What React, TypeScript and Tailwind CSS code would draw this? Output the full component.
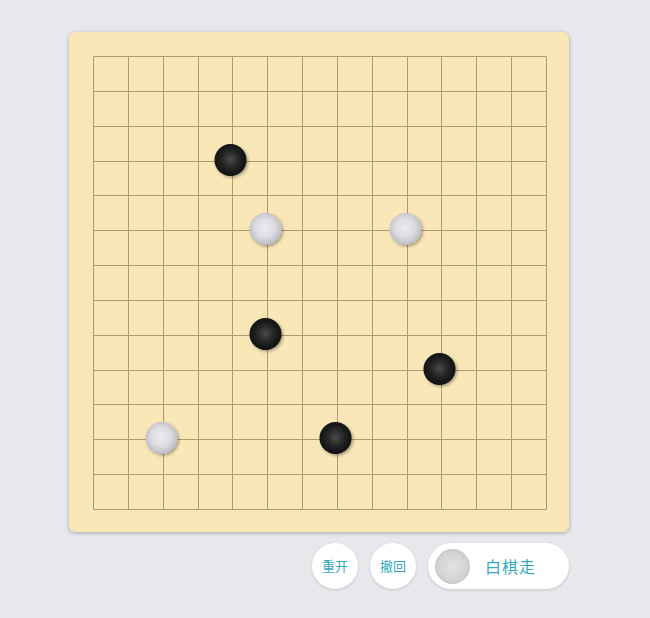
import React from "react";

type Stone = { col: number; row: number; black: boolean };

const stones: Stone[] = [
  { col: 4, row: 3, black: true },
  { col: 5, row: 5, black: false },
  { col: 9, row: 5, black: false },
  { col: 5, row: 8, black: true },
  { col: 10, row: 9, black: true },
  { col: 2, row: 11, black: false },
  { col: 7, row: 11, black: true },
];

const CELLS = 13;
const GRID = 453;
const STEP = GRID / CELLS;
const PAD = 24;

function Board() {
  const lines = Array.from({ length: CELLS + 1 }, (_, i) => PAD + 0.5 + Math.round(i * STEP));
  return (
    <div className="w-[500px] h-[500px] rounded-md bg-[#f9e7b8] shadow-[0_1px_4px_rgba(0,0,0,0.28)]">
      <svg width="500" height="500" viewBox="0 0 500 500">
        <defs>
          <radialGradient id="blk" cx="50%" cy="48%" r="55%">
            <stop offset="0%" stopColor="#4a4a4a" />
            <stop offset="50%" stopColor="#252525" />
            <stop offset="100%" stopColor="#0b0b0b" />
          </radialGradient>
          <radialGradient id="wht" cx="48%" cy="46%" r="55%">
            <stop offset="0%" stopColor="#ececef" />
            <stop offset="55%" stopColor="#dcdce1" />
            <stop offset="100%" stopColor="#b9b9c1" />
          </radialGradient>
          <filter id="sh" x="-30%" y="-30%" width="160%" height="160%">
            <feDropShadow dx="1.5" dy="1.5" stdDeviation="1.5" floodColor="#000" floodOpacity="0.35" />
          </filter>
        </defs>
        {lines.map((p, i) => (
          <g key={i} stroke="#b09a6a" strokeWidth="1">
            <line x1={p} y1={lines[0]} x2={p} y2={lines[CELLS]} />
            <line x1={lines[0]} y1={p} x2={lines[CELLS]} y2={p} />
          </g>
        ))}
        {stones.map((s, i) => (
          <circle
            key={i}
            cx={lines[s.col] - 2}
            cy={lines[s.row] - 1.5}
            r="16"
            fill={s.black ? "url(#blk)" : "url(#wht)"}
            filter="url(#sh)"
          />
        ))}
      </svg>
    </div>
  );
}

export default function App() {
  return (
    <div
      className="w-[650px] h-[618px] bg-[#e7e8ec] pt-[32px] pl-[69px]"
      style={{ fontFamily: '"Noto Sans CJK SC", "Noto Sans", sans-serif' }}
    >
      <div className="w-[500px] flex flex-col">
        <Board />
        {/* 操作按钮 */}
        <div className="flex justify-end items-center gap-3 mt-[11px]">
          <button className="w-[46px] h-[46px] rounded-full bg-white text-[13px] text-[#35a9c1] shadow-[0_1px_3px_rgba(0,0,0,0.15)]">
            重开
          </button>
          <button className="w-[46px] h-[46px] rounded-full bg-white text-[13px] text-[#35a9c1] shadow-[0_1px_3px_rgba(0,0,0,0.15)]">
            撤回
          </button>
          <div className="w-[141px] h-[46px] rounded-full bg-white flex items-center pl-[7px] shadow-[0_1px_3px_rgba(0,0,0,0.15)]">
            <span className="w-[35px] h-[35px] rounded-full bg-[radial-gradient(circle,#e2e2e2_0%,#d2d2d2_60%,#a9a9a9_100%)]" />
            <span className="ml-[15px] text-[16px] tracking-[1px] text-[#35a9c1]">白棋走</span>
          </div>
        </div>
      </div>
    </div>
  );
}
